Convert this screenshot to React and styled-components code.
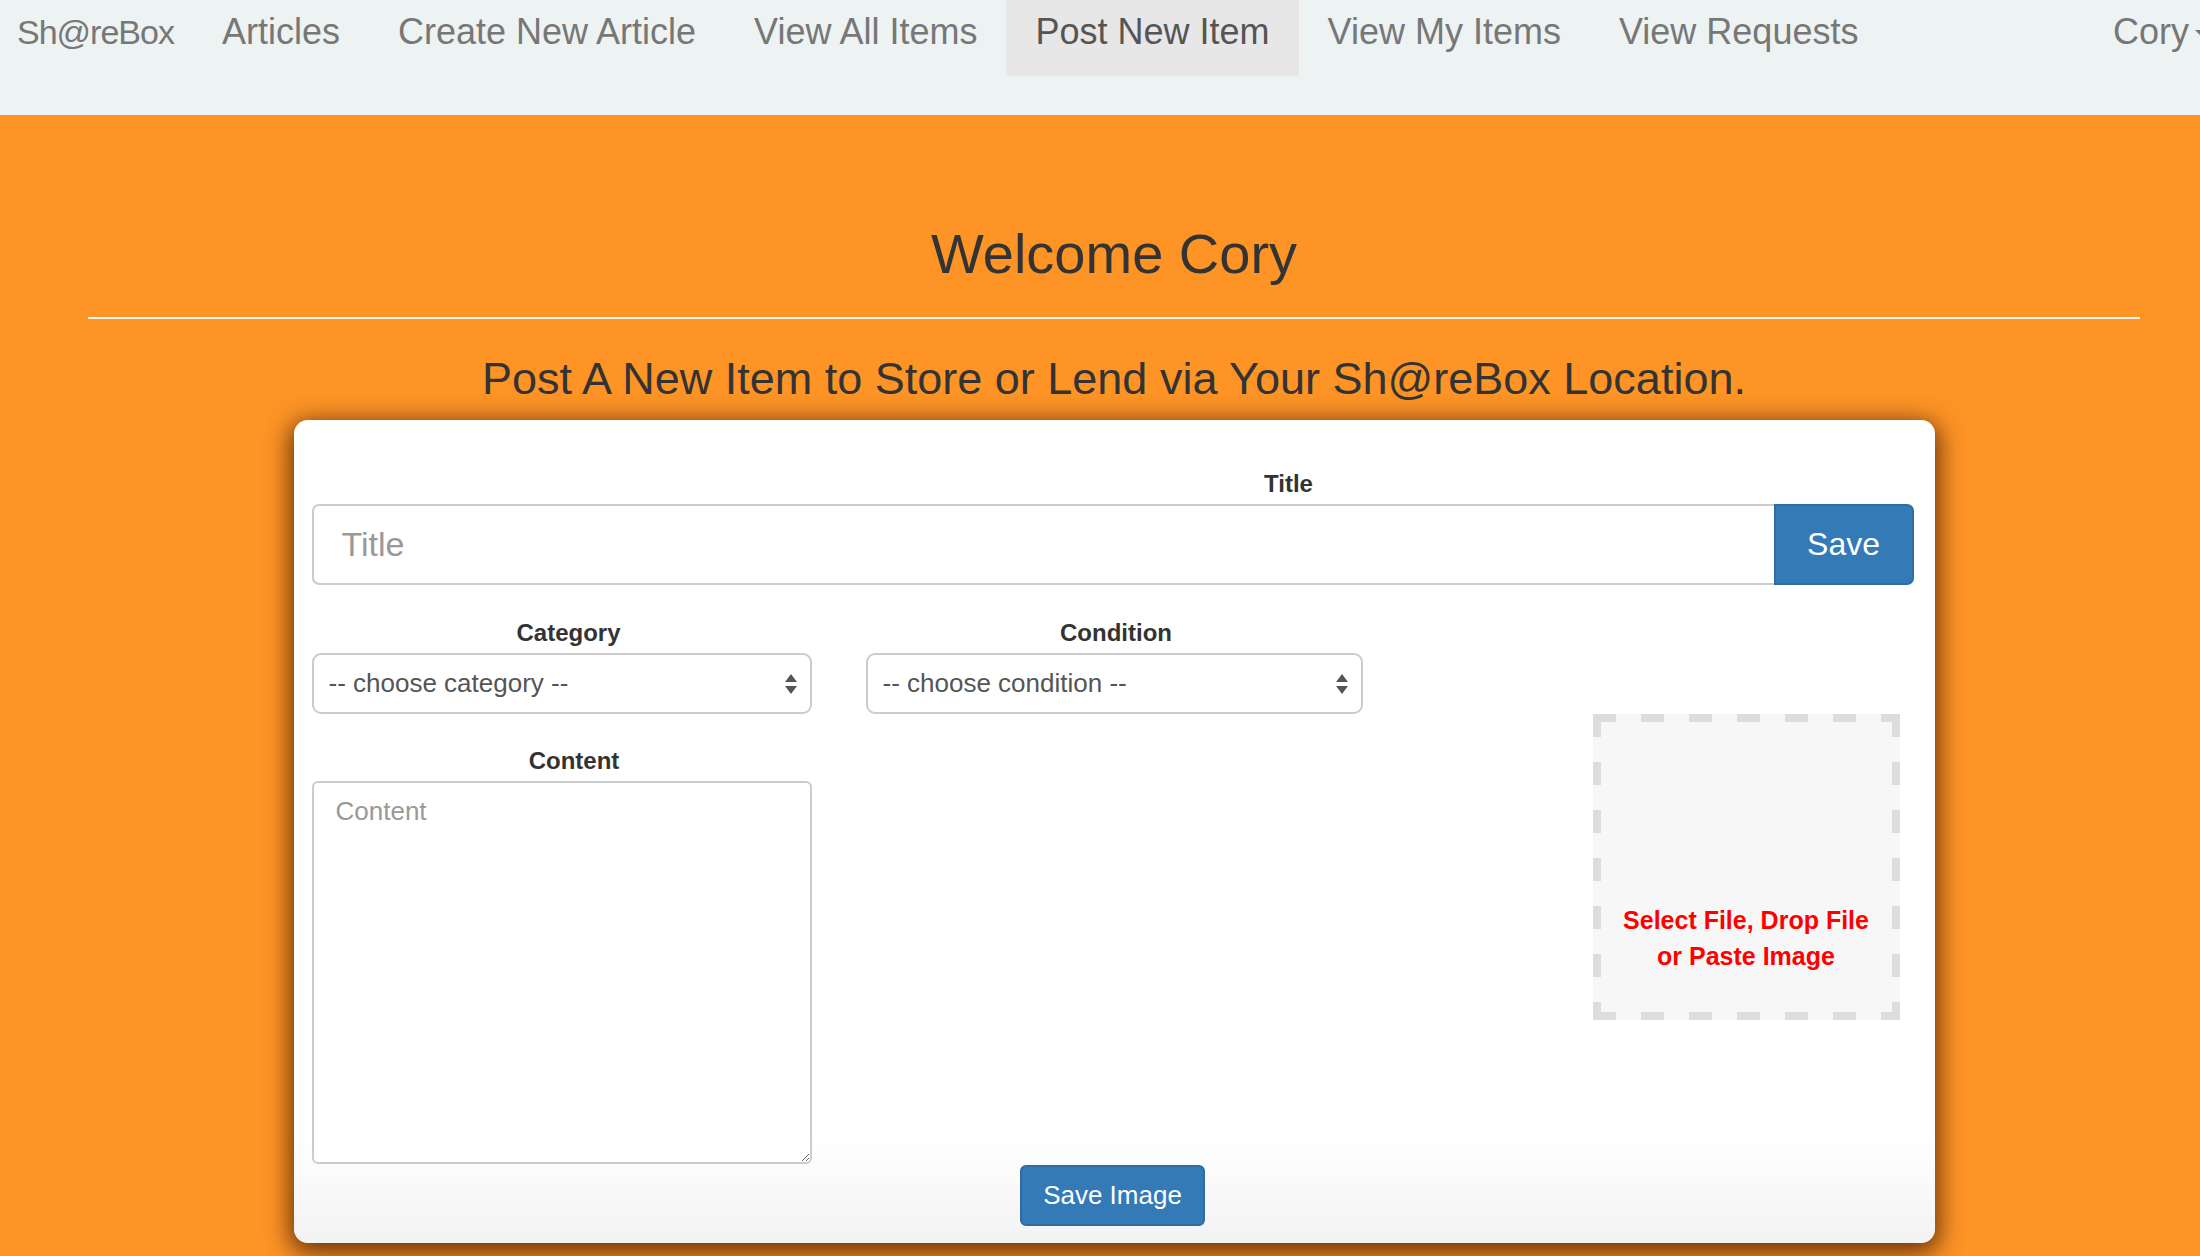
import React from "react"
import styled, { createGlobalStyle } from "styled-components"

const GlobalStyle = createGlobalStyle`
  html, body {
    margin: 0;
    padding: 0;
    width: 2200px;
    height: 1256px;
    overflow: hidden;
    background: #fe9426;
    font-family: "Liberation Sans", Arial, sans-serif;
  }
`

const NavBar = styled.nav`
  display: flex;
  align-items: flex-start;
  height: 115px;
  background: #edf2f2;
  padding-left: 17px;
  overflow: hidden;
`

const Brand = styled.a`
  font-size: 34px;
  letter-spacing: -1px;
  line-height: 36px;
  color: #777;
  padding: 14px 19px 0 0;
  height: 76px;
  box-sizing: border-box;
  text-decoration: none;
  white-space: nowrap;
`

const NavItem = styled.a`
  font-size: 36px;
  line-height: 36px;
  height: 76px;
  box-sizing: border-box;
  padding: 14px 29px 0;
  color: ${props => (props.active ? "#555" : "#777")};
  background: ${props => (props.active ? "#e7e7e7" : "transparent")};
  text-decoration: none;
  white-space: nowrap;
`

const UserItem = styled(NavItem)`
  margin-left: auto;
  margin-right: -40px;
  display: flex;
  gap: 6px;
`

const Caret = styled.span`
  display: inline-block;
  margin-top: 16px;
  border-top: 8px solid #777;
  border-left: 8px solid transparent;
  border-right: 8px solid transparent;
  height: 0;
`

const Main = styled.main`
  width: 2052px;
  margin-left: 88px;
  display: flex;
  flex-direction: column;
  align-items: center;
`

const Heading = styled.h1`
  margin: 108px 0 0;
  font-size: 56px;
  line-height: 62px;
  font-weight: normal;
  color: #333;
`

const Rule = styled.hr`
  align-self: stretch;
  margin: 32px 0 0;
  border: 0;
  border-top: 2px solid #f5f5f5;
`

const SubHeading = styled.h3`
  margin: 36px 0 0;
  font-size: 45px;
  line-height: 48px;
  font-weight: normal;
  color: #333;
`

const Card = styled.form`
  margin-top: 17px;
  width: 1641px;
  height: 823px;
  box-sizing: border-box;
  padding: 51px 21px 17px 18px;
  border-radius: 14px;
  background: linear-gradient(to bottom, #fff calc(100% - 110px), #f3f3f3 100%);
  box-shadow: 0 6px 24px 4px rgba(60, 25, 0, 0.78);
  display: flex;
  flex-direction: column;
`

const Label = styled.label`
  display: block;
  font-size: 24px;
  line-height: 26px;
  font-weight: bold;
  color: #333;
  text-align: center;
  margin-bottom: 7px;
  padding-left: ${props => props.offset || 0}px;
`

const InputGroup = styled.div`
  display: flex;
  height: 81px;
`

const TitleInput = styled.input`
  flex: 1;
  height: 81px;
  box-sizing: border-box;
  border: 2px solid #ccc;
  border-right: 0;
  border-radius: 7px 0 0 7px;
  padding: 0 28px;
  font-family: inherit;
  font-size: 34px;
  color: #555;
  outline: none;
  &::placeholder {
    color: #999;
  }
`

const SaveButton = styled.button`
  width: 140px;
  height: 81px;
  border: 2px solid #2e6da4;
  border-radius: 0 7px 7px 0;
  background: #337ab7;
  color: #fff;
  font-family: inherit;
  font-size: 32px;
`

const FieldGrid = styled.div`
  margin-top: 35px;
  display: grid;
  grid-template-columns: 500px 497px 122px 307px;
  column-gap: 54px;
  align-items: start;
`

const Field = styled.div`
  display: flex;
  flex-direction: column;
  padding-top: ${props => props.top || 0}px;
  grid-column: ${props => props.col || "auto"};
  grid-row: ${props => props.row || "auto"};
`

const SelectBox = styled.div`
  height: 61px;
  box-sizing: border-box;
  border: 2px solid #ccc;
  border-radius: 9px;
  background: #fff;
  display: flex;
  align-items: center;
  justify-content: space-between;
  padding: 0 12px 0 15px;
  font-size: 26px;
  color: #555;
`

const ContentArea = styled.textarea`
  height: 383px;
  box-sizing: border-box;
  border: 2px solid #ccc;
  border-radius: 6px;
  padding: 10px 22px;
  font-family: inherit;
  font-size: 26px;
  line-height: 36px;
  resize: vertical;
  outline: none;
  &::placeholder {
    color: #999;
  }
`

const dashH = "repeating-linear-gradient(to right, #ddd 0 23px, transparent 23px 48px)"
const dashV = "repeating-linear-gradient(to bottom, #ddd 0 23px, transparent 23px 48px)"

const DropZone = styled.div`
  grid-column: 4;
  grid-row: 2;
  height: 306px;
  box-sizing: border-box;
  background-color: #f7f7f7;
  background-image: ${dashH}, ${dashH}, ${dashV}, ${dashV};
  background-size: 100% 8px, 100% 8px, 8px 100%, 8px 100%;
  background-position: left top, left bottom, left top, right top;
  background-repeat: no-repeat;
  display: flex;
  flex-direction: column;
  justify-content: flex-end;
  padding-bottom: 46px;
  text-align: center;
  color: #f00;
  font-weight: bold;
  font-size: 25px;
  line-height: 36px;
`

const SaveImageButton = styled.button`
  align-self: center;
  margin-top: 1px;
  width: 185px;
  height: 61px;
  border: 2px solid #2e6da4;
  border-radius: 6px;
  background: #337ab7;
  color: #fff;
  font-family: inherit;
  font-size: 26px;
`

const SortArrows = () => (
  <svg width="14" height="24" viewBox="0 0 14 24">
    <path d="M7 2 L13 10 L1 10 Z" fill="#555" />
    <path d="M7 22 L13 14 L1 14 Z" fill="#555" />
  </svg>
)

const navLinks = [
  "Articles",
  "Create New Article",
  "View All Items",
  "Post New Item",
  "View My Items",
  "View Requests",
]

const App = () => {
  return (
    <>
      <GlobalStyle />
      <NavBar>
        <Brand>Sh@reBox</Brand>
        {navLinks.map(link => (
          <NavItem key={link} active={link === "Post New Item"}>
            {link}
          </NavItem>
        ))}
        <UserItem>
          Cory <Caret />
        </UserItem>
      </NavBar>
      <Main>
        <Heading>Welcome Cory</Heading>
        <Rule />
        <SubHeading>Post A New Item to Store or Lend via Your Sh@reBox Location.</SubHeading>
        <Card onSubmit={e => e.preventDefault()}>
          <Label offset={352}>Title</Label>
          <InputGroup>
            <TitleInput placeholder="Title" />
            <SaveButton type="button">Save</SaveButton>
          </InputGroup>
          <FieldGrid>
            <Field col={1} row={1}>
              <Label offset={14}>Category</Label>
              <SelectBox>
                -- choose category --
                <SortArrows />
              </SelectBox>
            </Field>
            <Field col={2} row={1}>
              <Label offset={4}>Condition</Label>
              <SelectBox>
                -- choose condition --
                <SortArrows />
              </SelectBox>
            </Field>
            <Field col={1} row={2} top={34}>
              <Label offset={25}>Content</Label>
              <ContentArea placeholder="Content" />
            </Field>
            <DropZone>
              <span>Select File, Drop File</span>
              <span>or Paste Image</span>
            </DropZone>
          </FieldGrid>
          <SaveImageButton type="button">Save Image</SaveImageButton>
        </Card>
      </Main>
    </>
  )
}

export default App
